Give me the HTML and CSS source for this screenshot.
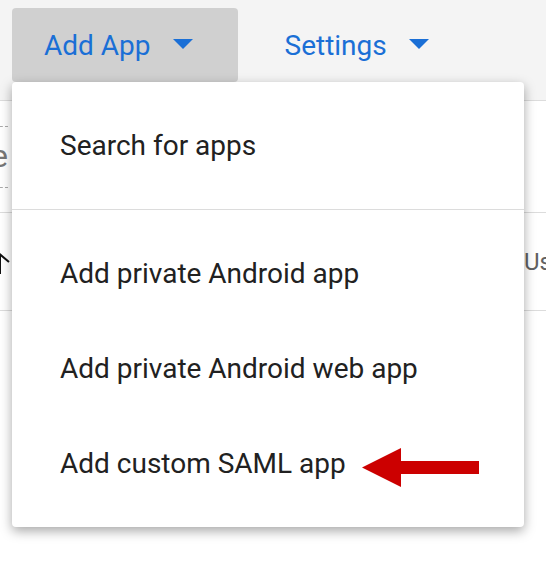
FILE: index.html
```html
<!DOCTYPE html>
<html lang="en">
<head>
    <meta charset="UTF-8">
    <title>Apps - Admin console</title>
    <meta name="viewport" content="width=device-width, initial-scale=1">
    <link rel="stylesheet" href="styles.css">
</head>
<body>
    <div class="topbar">
        <button class="nav-btn active" type="button">Add App <span class="caret"></span></button>
        <button class="nav-btn" type="button">Settings <span class="caret"></span></button>
    </div>

    <div class="content">
        <div class="filters">
            <div class="filter-chip">e</div>
        </div>
        <div class="table-head">
            <svg class="sort-icon" width="12" height="22" viewBox="0 0 12 22">
                <path d="M1 2 L1 22 M0 1.5 L10 10" stroke="#111" stroke-width="2" fill="none"/>
            </svg>
            <span class="col-users">Us</span>
        </div>
    </div>

    <!-- Add App dropdown, opened -->
    <div class="menu">
        <div class="menu-group">
            <div class="menu-item">Search for apps</div>
        </div>
        <div class="menu-group">
            <div class="menu-item">Add private Android app</div>
            <div class="menu-item">Add private Android web app</div>
            <div class="menu-item">Add custom SAML app</div>
        </div>
    </div>

    <svg class="callout" width="118" height="41" viewBox="0 0 118 41">
        <polygon points="0,20.5 39,1 39,14 117,14 117,27 39,27 39,40" fill="#cc0000"/>
    </svg>
</body>
</html>
```

FILE: styles.css
```css
body { margin: 0; font-family: Roboto, "Noto Sans", sans-serif; background: #fff; overflow: hidden; }

.topbar { height: 92px; padding-top: 8px; padding-left: 12px; background: #f4f4f4; border-bottom: 1px solid #dcdcdc; display: flex; align-items: flex-start; }
.nav-btn { height: 74px; padding: 0 45px 0 32px; margin-right: 15px; border: none; border-radius: 4px; background: transparent; color: #1a6fd6; font-family: inherit; font-size: 28px; display: flex; align-items: center; gap: 22px; cursor: pointer; }
.nav-btn.active { background: #d0d0d0; }
.caret { width: 0; height: 0; border-left: 10px solid transparent; border-right: 10px solid transparent; border-top: 10px solid #1a6fd6; margin-top: -2px; }

.content { background: #fff; }
.filters { height: 111px; display: flex; align-items: center; }
.filter-chip { width: 60px; margin-left: -52px; height: 60px; line-height: 58px; border-top: 1px dashed #aaa; border-bottom: 1px dashed #aaa; color: #777; font-size: 32px; text-align: right; }
.table-head { height: 97px; border-top: 1px solid #dcdcdc; border-bottom: 1px solid #dcdcdc; display: flex; align-items: center; }
.sort-icon { margin-left: -1px; margin-top: 2px; }
.col-users { margin-left: auto; width: 22px; overflow: hidden; white-space: nowrap; color: #616161; font-size: 24px; }

.menu { position: absolute; top: 82px; left: 12px; width: 512px; background: #fff; border-radius: 4px; box-shadow: 0 4px 12px rgba(0, 0, 0, 0.35); }
.menu-group { padding: 16px 0; }
.menu-group + .menu-group { border-top: 1px solid #dcdcdc; }
.menu-item { height: 95px; padding-left: 48px; display: flex; align-items: center; font-size: 28px; color: #212121; }

.callout { position: absolute; left: 362px; top: 447px; }
```
